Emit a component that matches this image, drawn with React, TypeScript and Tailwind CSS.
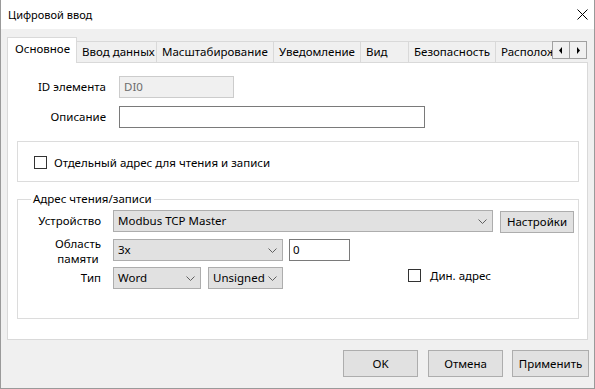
import React from "react";

function Chevron() {
  return (
    <svg width="9" height="5" viewBox="0 0 9 5" className="shrink-0">
      <path d="M0.5 0.5 L4.5 4.5 L8.5 0.5" stroke="#606060" strokeWidth="1" fill="none" />
    </svg>
  );
}

function Select({ className, value }: { className: string; value: string }) {
  return (
    <div
      className={
        "flex h-[22px] items-center justify-between border border-[#adadad] bg-[#e1e1e1] pl-[4px] pr-[5px] " +
        className
      }
    >
      <span className="whitespace-nowrap">{value}</span>
      <Chevron />
    </div>
  );
}

function CheckBox() {
  return <div className="h-[13px] w-[13px] shrink-0 border border-[#333333] bg-white" />;
}

const tabs = [
  { label: "Ввод данных", w: "w-[80px]" },
  { label: "Масштабирование", w: "w-[117px]" },
  { label: "Уведомление", w: "w-[87px]" },
  { label: "Вид", w: "w-[48px]" },
  { label: "Безопасность", w: "w-[87px]" },
  { label: "Расположение", w: "w-[90px]" },
];

export default function App() {
  return (
    <div className="flex h-[389px] w-[595px] flex-col border-x border-b border-[#9a9a9a] bg-[#f0f0f0] font-['Noto_Sans','Segoe_UI',sans-serif] text-[11.5px] leading-[16px] text-black">
      {/* Title bar */}
      <div className="flex h-[29px] items-center justify-between bg-white pl-[7px] pr-[6px]">
        <span className="text-[11px]">Цифровой ввод</span>
        <svg width="11" height="11" viewBox="0 0 11 11">
          <path d="M0.5 0.5 L10.5 10.5 M10.5 0.5 L0.5 10.5" stroke="#000" strokeWidth="1" />
        </svg>
      </div>

      {/* Tabs row */}
      <div className="relative z-10 ml-[6px] mt-[8px] flex h-[26px] items-start">
        <div className="flex h-[26px] w-[545px] items-start overflow-hidden">
          <div className="flex h-[26px] w-[70px] shrink-0 items-start border-x border-t border-[#d9d9d9] bg-white pl-[7px] pt-[3px]">
            Основное
          </div>
          {tabs.map((t) => (
            <div
              key={t.label}
              className={
                "mt-[4px] flex h-[21px] shrink-0 items-center whitespace-nowrap border-r border-t border-[#d9d9d9] bg-[#f0f0f0] pl-[5px] " +
                t.w
              }
            >
              {t.label}
            </div>
          ))}
        </div>
        <div className="mt-[4px] flex">
          <div className="flex h-[18px] w-[18px] items-center justify-center border border-[#a0a0a0] bg-[#f0f0f0]">
            <svg width="4" height="7" viewBox="0 0 4 7">
              <path d="M3 0 L0 3.5 L3 7 Z" fill="#000" />
            </svg>
          </div>
          <div className="-ml-px flex h-[18px] w-[18px] items-center justify-center border border-[#a0a0a0] bg-[#f0f0f0]">
            <svg width="4" height="7" viewBox="0 0 4 7">
              <path d="M1 0 L4 3.5 L1 7 Z" fill="#000" />
            </svg>
          </div>
        </div>
      </div>

      {/* Panel */}
      <div className="-mt-px ml-[6px] flex h-[278px] w-[581px] flex-col border border-[#d9d9d9] bg-white">
        <div className="mt-[13px] flex items-center">
          <div className="w-[98px] text-right">ID элемента</div>
          <div className="ml-[13px] flex h-[22px] w-[115px] items-center border border-[#cccccc] bg-[#f0f0f0] pl-[4px] text-[#6d6d6d]">
            DI0
          </div>
        </div>
        <div className="mt-[8px] flex items-center">
          <div className="w-[98px] text-right">Описание</div>
          <div className="ml-[13px] h-[22px] w-[306px] border border-[#7a7a7a] bg-white" />
        </div>

        <div className="ml-[9px] mt-[13px] h-[41px] w-[562px] border border-[#dcdcdc] pl-[16px] pt-[14px]">
          <div className="flex h-[13px] items-center">
            <CheckBox />
            <span className="ml-[7px] whitespace-nowrap">Отдельный адрес для чтения и записи</span>
          </div>
        </div>

        <fieldset className="ml-[9px] mt-[9px] w-[562px] border border-[#dcdcdc] pb-[29px]">
          <legend className="ml-[13px] px-[2px] leading-[16px]">Адрес чтения/записи</legend>
          <div className="mt-[3px] flex items-start">
            <div className="flex h-[22px] w-[83px] items-center justify-end">Устройство</div>
            <Select className="ml-[12px] w-[380px]" value="Modbus TCP Master" />
            <div className="ml-[7px] mt-[1px] flex h-[22px] w-[74px] items-center justify-center border border-[#adadad] bg-[#e1e1e1]">
              Настройки
            </div>
          </div>
          <div className="mt-[1px] flex items-center">
            <div className="flex w-[83px] justify-end">
              <div className="flex flex-col items-center pt-[2px] leading-[15px]">
                <span>Область</span>
                <span>памяти</span>
              </div>
            </div>
            <Select className="ml-[12px] w-[170px]" value="3x" />
            <div className="ml-[6px] flex h-[22px] w-[61px] items-center border border-[#7a7a7a] bg-white pl-[3px]">
              0
            </div>
          </div>
          <div className="mt-[1px] flex items-start">
            <div className="flex h-[22px] w-[83px] items-center justify-end">Тип</div>
            <Select className="ml-[12px] w-[88px]" value="Word" />
            <Select className="ml-[7px] w-[75px]" value="Unsigned" />
            <div className="ml-[125px] mt-[2px] flex h-[13px] items-center">
              <CheckBox />
              <span className="ml-[9px] whitespace-nowrap">Дин. адрес</span>
            </div>
          </div>
        </fieldset>
      </div>

      {/* Bottom buttons */}
      <div className="mr-[5px] mt-[10px] flex justify-end">
        <div className="flex h-[27px] w-[75px] items-center justify-center border border-[#adadad] bg-[#e1e1e1]">OK</div>
        <div className="ml-[10px] flex h-[27px] w-[75px] items-center justify-center border border-[#adadad] bg-[#e1e1e1]">
          Отмена
        </div>
        <div className="ml-[9px] flex h-[27px] w-[77px] items-center justify-center border border-[#adadad] bg-[#e1e1e1]">
          Применить
        </div>
      </div>
    </div>
  );
}
